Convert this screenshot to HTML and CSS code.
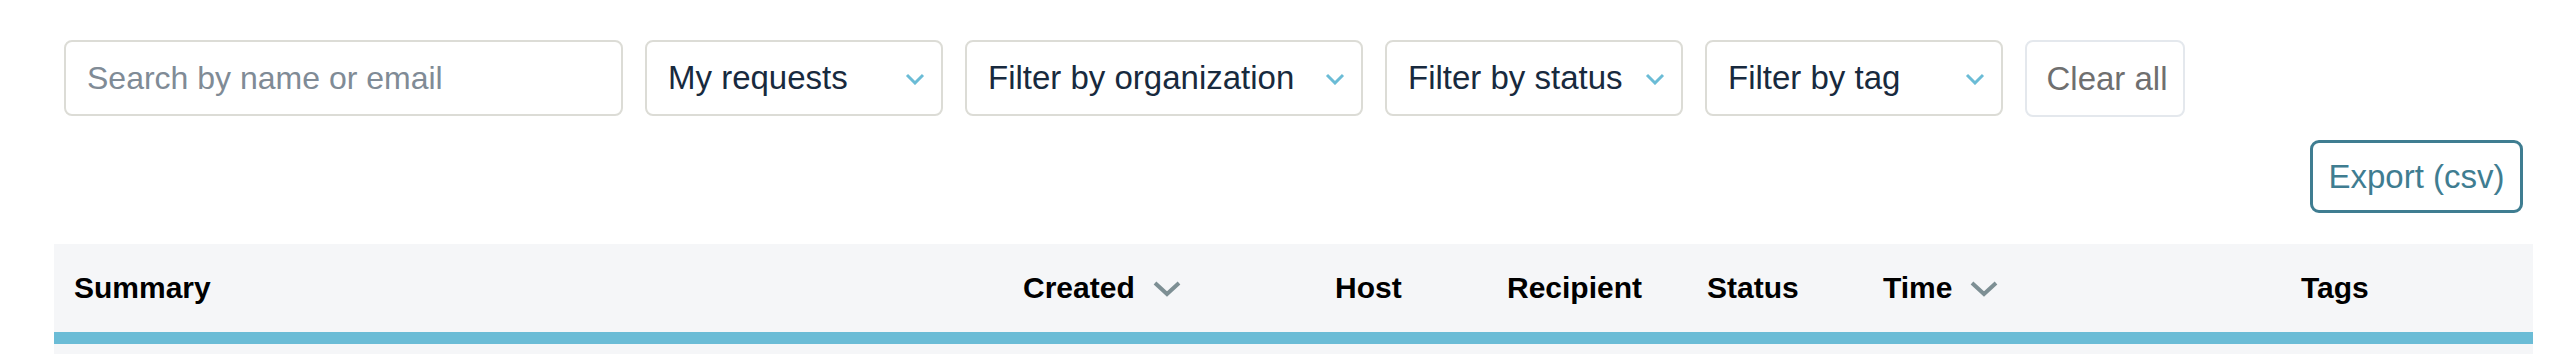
FILE: index.html
```html
<!DOCTYPE html>
<html>
<head>
<title>Requests</title>
<link rel="stylesheet" href="styles.css">
</head>
<body>
<div class="requests">

  <div class="filters">
    <div class="search">Search by name or email</div>
    <div class="select mine">
      <span>My requests</span>
      <svg class="caret" width="20" height="12" viewBox="0 0 20 12"><path d="M2 2 L10 10 L18 2" fill="none" stroke="#6bbcd6" stroke-width="3"/></svg>
    </div>
    <div class="select org">
      <span>Filter by organization</span>
      <svg class="caret" width="20" height="12" viewBox="0 0 20 12"><path d="M2 2 L10 10 L18 2" fill="none" stroke="#6bbcd6" stroke-width="3"/></svg>
    </div>
    <div class="select status">
      <span>Filter by status</span>
      <svg class="caret" width="20" height="12" viewBox="0 0 20 12"><path d="M2 2 L10 10 L18 2" fill="none" stroke="#6bbcd6" stroke-width="3"/></svg>
    </div>
    <div class="select tag">
      <span>Filter by tag</span>
      <svg class="caret" width="20" height="12" viewBox="0 0 20 12"><path d="M2 2 L10 10 L18 2" fill="none" stroke="#6bbcd6" stroke-width="3"/></svg>
    </div>
    <div class="clear">Clear all</div>
  </div>

  <div class="actions">
    <div class="export">Export (csv)</div>
  </div>

  <div class="table-head">
    <div class="col">Summary</div>
    <div class="col">Created
      <svg class="sort" width="28" height="16" viewBox="0 0 28 16"><path d="M2 2 L14 13 L26 2" fill="none" stroke="#7d8f94" stroke-width="4"/></svg>
    </div>
    <div class="col">Host</div>
    <div class="col">Recipient</div>
    <div class="col">Status</div>
    <div class="col">Time
      <svg class="sort" width="28" height="16" viewBox="0 0 28 16"><path d="M2 2 L14 13 L26 2" fill="none" stroke="#7d8f94" stroke-width="4"/></svg>
    </div>
    <div class="col">Tags</div>
  </div>
  <div class="table-rule"></div>
  <div class="table-body"></div>

</div>
</body>
</html>
```

FILE: styles.css
```css
body {
  margin: 0;
  background: #ffffff;
  font-family: "Liberation Sans", Arial, sans-serif;
}
.requests {
  width: 2479px;
  margin-left: 54px;
  padding-top: 40px;
}
.filters {
  display: flex;
  padding: 0 10px;
  gap: 22px;
}
.search, .select, .clear {
  box-sizing: border-box;
  height: 76px;
  border: 2px solid #dcdcd6;
  border-radius: 8px;
  display: flex;
  align-items: center;
  font-size: 33px;
}
.search {
  width: 559px;
  padding-left: 21px;
  color: #808b96;
  font-size: 32px;
}
.select {
  justify-content: space-between;
  padding: 0 16px 0 21px;
  color: #182a3e;
}
.select .caret {
  margin-top: 2px;
}
.mine { width: 298px; }
.org { width: 398px; }
.status { width: 298px; }
.tag { width: 298px; }
.clear {
  width: 160px;
  height: 77px;
  justify-content: center;
  border-color: #e4e8ed;
  color: #6f6f6f;
  padding-left: 4px;
}
.actions {
  display: flex;
  justify-content: flex-end;
  padding: 23px 10px 0 10px;
}
.export {
  box-sizing: border-box;
  width: 213px;
  height: 73px;
  border: 3px solid #3f7d91;
  border-radius: 9px;
  display: flex;
  align-items: center;
  justify-content: center;
  color: #3f7d91;
  font-size: 33px;
}
.table-head {
  margin-top: 31px;
  height: 88px;
  background: #f5f6f8;
  display: grid;
  grid-template-columns: 949px 312px 172px 200px 176px 418px 252px;
  align-items: center;
}
.col {
  padding-left: 20px;
  font-size: 30px;
  font-weight: bold;
  color: #000000;
  display: flex;
  align-items: center;
  gap: 18px;
}
.col .sort {
  margin-top: 2px;
}
.table-rule {
  height: 12px;
  background: #6bbcd6;
}
.table-body {
  height: 20px;
  background: #f5f6f8;
}
```
